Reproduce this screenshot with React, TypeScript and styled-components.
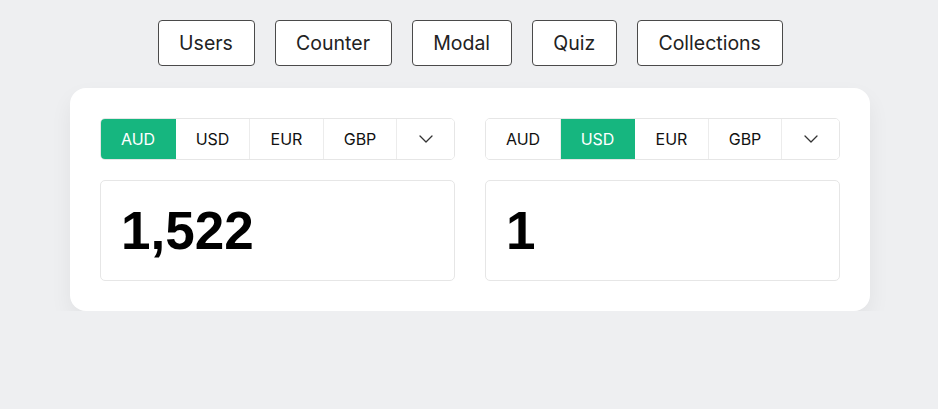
import React, { useState } from "react";
import styled, { createGlobalStyle } from "styled-components";

const Global = createGlobalStyle`
  html, body { margin: 0; padding: 0; background: #eeeff1; }
  body { font-family: Inter, "Noto Sans", sans-serif; }
  * { box-sizing: border-box; }
`;

const Page = styled.div`
  display: flex;
  flex-direction: column;
  align-items: center;
  padding: 20px 0 0 2px;
`;

const Nav = styled.nav`
  display: flex;
  gap: 20px;
`;

const NavButton = styled.button`
  height: 46px;
  padding: 0 20.6px;
  border: 1px solid #4a4a4a;
  border-radius: 4px;
  background: #fff;
  font-family: Inter, sans-serif;
  font-size: 19.5px;
  color: #222;
  cursor: pointer;
`;

const Card = styled.div`
  margin-top: 22px;
  width: 800px;
  background: #fff;
  border-radius: 16px;
  padding: 30px;
  display: flex;
  gap: 30px;
  box-shadow: 0 10px 22px rgba(0, 0, 0, 0.06);
`;

const Block = styled.div`
  flex: 1;
  min-width: 0;
  display: flex;
  flex-direction: column;
  gap: 20px;
`;

const Tabs = styled.ul`
  display: flex;
  margin: 0;
  padding: 0;
  list-style: none;
  height: 42px;
  border: 1px solid #e6e6e6;
  border-radius: 5px;
  overflow: hidden;
`;

const Tab = styled.li<{ $active?: boolean; $w: number }>`
  width: ${(p) => p.$w}px;
  flex-shrink: 0;
  display: flex;
  align-items: center;
  justify-content: center;
  font-size: 16px;
  color: ${(p) => (p.$active ? "#fff" : "#111")};
  background: ${(p) => (p.$active ? "#16b67f" : "#fff")};
  border-right: 1px solid ${(p) => (p.$active ? "#16b67f" : "#ececec")};
  cursor: pointer;
  &:last-child { border-right: none; flex: 1 1 auto; width: auto; }
`;

const Input = styled.input`
  height: 101px;
  width: 100%;
  border: 1px solid #e6e6e6;
  border-radius: 5px;
  padding: 0 20px;
  font-family: "Liberation Sans", Arial, sans-serif;
  font-weight: 700;
  font-size: 53px;
  color: #000;
  outline: none;
`;

const Chevron = () => (
  <svg width="16" height="16" viewBox="0 0 16 16" fill="none">
    <path d="M2 5l6 6 6-6" stroke="#333" strokeWidth="1.3" strokeLinecap="round" strokeLinejoin="round" />
  </svg>
);

const currencies = ["AUD", "USD", "EUR", "GBP"];
const widths = [75, 74, 74, 73];

const Converter = ({ active, value }: { active: string; value: string }) => {
  const [cur, setCur] = useState(active);
  const [val, setVal] = useState(value);
  return (
    <Block>
      <Tabs>
        {currencies.map((c, i) => (
          <Tab key={c} $w={widths[i]} $active={c === cur} onClick={() => setCur(c)}>
            {c}
          </Tab>
        ))}
        <Tab $w={58}>
          <Chevron />
        </Tab>
      </Tabs>
      <Input value={val} onChange={(e) => setVal(e.target.value)} />
    </Block>
  );
};

export default function App() {
  return (
    <>
      <Global />
      <Page>
        <Nav>
          {["Users", "Counter", "Modal", "Quiz", "Collections"].map((n) => (
            <NavButton key={n}>{n}</NavButton>
          ))}
        </Nav>
        <Card>
          <Converter active="AUD" value="1,522" />
          <Converter active="USD" value="1" />
        </Card>
      </Page>
    </>
  );
}
